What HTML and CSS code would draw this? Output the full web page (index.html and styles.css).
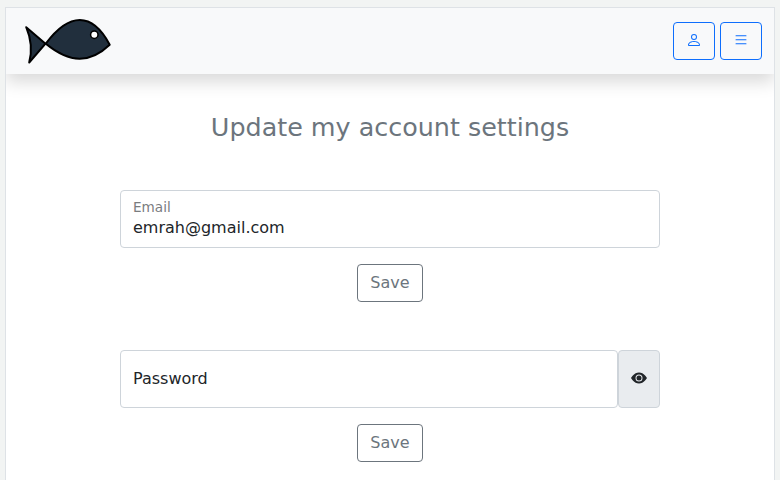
FILE: index.html
```html
<!DOCTYPE html>
<html lang="en">
<head>
<meta charset="utf-8">
<title>Account settings</title>
<link rel="stylesheet" href="styles.css">
</head>
<body>
<div class="page">
  <header class="navbar">
    <svg class="logo" width="88" height="48" viewBox="0 0 88 48">
      <path d="M2.200 10.200 21.500 26.700 5.200 45.500Q9.800 28 2.200 10.200Z"/>
      <path d="M21.800 26.700C45-4.500 68-5.500 85.700 27.700C66 46.500 46 46.500 21.800 26.700Z"/>
      <circle cx="70.300" cy="17.700" r="3.700"/>
    </svg>
    <nav class="actions">
      <button class="btn btn-primary" aria-label="Account">
        <svg class="icon" width="16" height="16" viewBox="0 0 16 16"><path d="M8 8a3 3 0 1 0 0-6 3 3 0 0 0 0 6zm2-3a2 2 0 1 1-4 0 2 2 0 0 1 4 0zm4 8c0 1-1 1-1 1H3s-1 0-1-1 1-4 6-4 6 3 6 4zm-1-.004c-.001-.246-.154-.986-.832-1.664C11.516 10.680 10.289 10 8 10c-2.290 0-3.516.680-4.168 1.332-.678.678-.830 1.418-.832 1.664h10z"/></svg>
      </button>
      <button class="btn btn-primary" aria-label="Menu">
        <svg class="icon" width="16" height="16" viewBox="0 .300 16 16"><path d="M2.500 12a.5.5 0 0 1 .5-.5h10a.5.5 0 0 1 0 1H3a.5.5 0 0 1-.5-.5zm0-4a.5.5 0 0 1 .5-.5h10a.5.5 0 0 1 0 1H3a.5.5 0 0 1-.5-.5zm0-4a.5.5 0 0 1 .5-.5h10a.5.5 0 0 1 0 1H3a.5.5 0 0 1-.5-.5z"/></svg>
      </button>
    </nav>
  </header>
  <main class="settings">
    <h1 class="title">Update my account settings</h1>
    <form class="form">
      <label class="field">
        <span class="field-label">Email</span>
        <span class="field-value">emrah@gmail.com</span>
      </label>
      <button class="btn btn-secondary" type="button">Save</button>
    </form>
    <form class="form">
      <div class="input-group">
        <label class="field"><span class="field-value">Password</span></label>
        <span class="addon">
          <svg class="icon" width="16" height="16" viewBox="0 0 16 16"><path d="M10.500 8a2.500 2.500 0 1 1-5 0 2.500 2.500 0 0 1 5 0z"/><path d="M0 8s3-5.500 8-5.500S16 8 16 8s-3 5.500-8 5.500S0 8 0 8zm8 3.500a3.500 3.500 0 1 0 0-7 3.500 3.500 0 0 0 0 7z"/></svg>
        </span>
      </div>
      <button class="btn btn-secondary" type="button">Save</button>
    </form>
  </main>
</div>
</body>
</html>
```
FILE: styles.css
```css
* { box-sizing: border-box; }
body {
  margin: 0;
  padding: 7px 5px 0;
  height: 480px;
  overflow: hidden;
  background: #f2f4f3;
  color: #212529;
  font: 16px/24px "DejaVu Sans", sans-serif;
}
.page {
  height: 473px;
  overflow: hidden;
  background: #fff;
  border: 1px solid #dee2e6;
  border-bottom: 0;
}
.navbar {
  display: flex;
  justify-content: space-between;
  align-items: center;
  height: 66px;
  padding: 0 12px 0 18px;
  background: #f8f9fa;
  box-shadow: 0 8px 16px rgba(0, 0, 0, .15);
}
.logo {
  display: block;
  fill: #212f3d;
  stroke: #000;
  stroke-width: 2;
  stroke-linejoin: round;
}
.logo circle { fill: #fff; stroke-width: 1.5; }
.actions { display: flex; gap: 5px; }
.btn {
  display: flex;
  align-items: center;
  height: 38px;
  padding: 6px 12px;
  border: 1px solid;
  border-radius: 4px;
  background: transparent;
  font: inherit;
}
.btn-primary { color: #0d6efd; padding-bottom: 8px; }
.btn-secondary { color: #6c757d; }
.icon { display: block; fill: currentColor; }
.settings {
  display: flex;
  flex-direction: column;
  align-items: center;
  gap: 48px;
  padding-top: 38px;
}
.title {
  margin: 0;
  color: #6c757d;
  font-size: 25.4px;
  font-weight: 400;
  line-height: 30px;
}
.form {
  display: flex;
  flex-direction: column;
  align-items: center;
  gap: 16px;
  width: 540px;
}
.field {
  display: flex;
  flex-direction: column;
  justify-content: center;
  width: 100%;
  height: 58px;
  padding: 0 12px;
  border: 1px solid #ced4da;
  border-radius: 4px;
}
.field-label {
  margin-bottom: 1px;
  color: #7a7c7f;
  font-size: 13.6px;
  line-height: 16px;
}
.input-group { display: flex; width: 100%; }
.input-group .field { flex: 1; }
.addon {
  display: flex;
  align-items: center;
  padding: 0 12px 2px;
  background: #e9ecef;
  border: 1px solid #ced4da;
  border-radius: 4px;
}
```
